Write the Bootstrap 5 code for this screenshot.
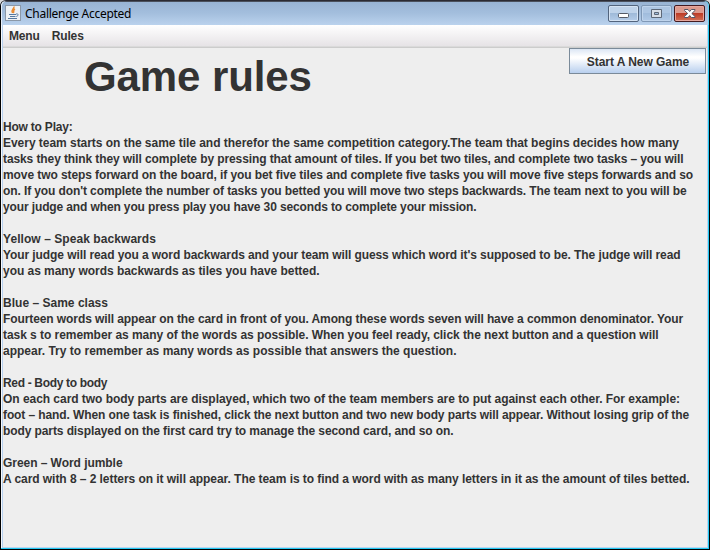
<!DOCTYPE html>
<html lang="en">
<head>
<meta charset="utf-8">
<meta name="viewport" content="width=device-width, initial-scale=1">
<title>Challenge Accepted</title>
<link rel="stylesheet" href="https://cdn.jsdelivr.net/npm/bootstrap@5.3.0/dist/css/bootstrap.min.css">
<style>
html,body{height:100%;background:#d8dade}
body{font-family:"Liberation Sans",Arial,sans-serif;font-weight:700;font-size:12px;line-height:16px;color:#333}
.window{width:710px;height:550px;background:#eee;border:1px solid #000;border-top-color:#2b2b33;border-radius:6px 6px 0 0;box-shadow:inset -1px -1px #22c8f2,inset 1px 0 #f4f8fd,inset -2px -2px #bcd6ee,inset 2px 0 #b7d0ee}
.titlebar{height:24px;padding:0 4px 0 4px;background:linear-gradient(#4a505c 0,#4a505c 1px,#98b4d4 1px,#a3bedd 50%,#bad2ed);border-radius:5px 5px 0 0;box-shadow:inset -1px 0 #5ed0f0,inset 1px 0 #e6eef8}
.caption-text{font:400 12px/24px "Noto Sans","Open Sans",sans-serif;color:#000;margin-left:4px;padding-top:1px;letter-spacing:-.28px}
.caption-btn{width:31px;height:17px;border:1px solid #52647d;border-radius:2px;box-shadow:inset 0 0 0 1px #d5e3f3;background:linear-gradient(#bfd3ea 50%,#9fbad9 50%,#b5cde9)}
.caption-btn.dim{border-color:#7f98b6;box-shadow:inset 0 0 0 1px #bfd4ec;background:linear-gradient(#adc6e3 50%,#a0bcdc 50%,#b1cae7)}
.caption-btn.close-x{border-color:#431a20;box-shadow:inset 0 0 0 1px #e6a79e;background:linear-gradient(#dc9a8e 45%,#bd3c27 50%,#d27156)}
.caption-set{gap:2px;padding-top:1px}
.menubar{height:23px;margin:0 2px 0 2px;padding-left:6px;background:linear-gradient(#fff,#e6e3e6 21px,#dadada 21px,#dadada 22px,#ccc 22px)}
.menubar a{color:#333;line-height:22px;letter-spacing:-.15px}
.page{margin:0 3px 0 2px}
.start-btn{width:137px;height:26px;font:700 12px/24px "Liberation Sans",Arial,sans-serif;letter-spacing:-.04px;border:1px solid #7a8a99;border-radius:0;color:#333;background:linear-gradient(#dce6f4,#fff 32%,#fff 38%,#b8cfee)}
.start-btn span{display:block;padding:1px 0 0 1px}
.headline{font-size:42px;line-height:48px;padding:5px 0 0 81px;font-weight:700;letter-spacing:-.1px}
.rules{padding-top:18px}
.rules p{margin:0 0 16px;white-space:nowrap}
</style>
</head>
<body class="overflow-hidden">
<div class="window">
<header class="titlebar d-flex align-items-center">
<svg width="16" height="16" viewBox="0 0 16 16"><rect x=".5" y=".5" width="15" height="15" fill="#edf1f5" stroke="#8b98a8"/><path d="M9 1.500C9.500 4 5.500 4.500 7.500 8M10 4C7.500 5.200 9.500 6 8.300 8" fill="none" stroke="#e88b32" stroke-width="1.500"/><path d="M4 9.500h7M5 11.500h5.500M3 13.500h9M11 9c3-.6 2.500 2 .3 2.500" fill="none" stroke="#5579a0"/></svg>
<span class="caption-text">Challenge Accepted</span>
<div class="caption-set ms-auto d-flex">
<svg class="caption-btn" viewBox="0 0 29 15"><rect x="9.500" y="7.500" width="10" height="4" rx="1" fill="#fff" stroke="#555b66"/></svg>
<svg class="caption-btn dim" viewBox="0 0 29 15"><path d="M9.500 3.500h10v8h-10zM12.500 6.500h4v2h-4z" fill="#d8dfe8" stroke="#5d6878" fill-rule="evenodd"/></svg>
<svg class="caption-btn close-x" viewBox="0 0 29 15"><path d="M9.500 3.500h3.500l1.700 2 1.700-2H20v1L16.800 7.500l3.200 3v1h-3.600l-1.700-2-1.700 2H9.500v-1l3.200-3-3.200-3z" fill="#fff" stroke="#535666"/></svg>
</div>
</header>
<nav class="menubar d-flex"><a class="text-decoration-none">Menu</a><a class="text-decoration-none ms-2 ps-1">Rules</a></nav>
<main class="page">
<div class="d-flex justify-content-between align-items-start"><h1 class="headline mb-0">Game rules</h1><button class="btn start-btn p-0"><span>Start A New Game</span></button></div>
<section class="rules">
<p><span data-w="69.500">How to Play:</span><br><span data-w="676">Every team starts on the same tile and therefor the same competition category.The team that begins decides how many</span><br><span data-w="680.5">tasks they think they will complete by pressing that amount of tiles. If you bet two tiles, and complete two tasks – you will</span><br><span data-w="690">move two steps forward on the board, if you bet five tiles and complete five tasks you will move five steps forwards and so</span><br><span data-w="683.5">on. If you don't complete the number of tasks you betted you will move two steps backwards. The team next to you will be</span><br><span data-w="473.5">your judge and when you press play you have 30 seconds to complete your mission.</span></p>
<p><span data-w="153">Yellow – Speak backwards</span><br><span data-w="677.5">Your judge will read you a word backwards and your team will guess which word it's supposed to be. The judge will read</span><br><span data-w="316.5">you as many words backwards as tiles you have betted.</span></p>
<p><span data-w="105">Blue – Same class</span><br><span data-w="680">Fourteen words will appear on the card in front of you. Among these words seven will have a common denominator. Your</span><br><span data-w="655.5">task s to remember as many of the words as possible. When you feel ready, click the next button and a question will</span><br><span data-w="453.5">appear. Try to remember as many words as possible that answers the question.</span></p>
<p><span data-w="104">Red - Body to body</span><br><span data-w="677">On each card two body parts are displayed, which two of the team members are to put against each other. For example:</span><br><span data-w="686">foot – hand. When one task is finished, click the next button and two new body parts will appear. Without losing grip of the</span><br><span data-w="450.5">body parts displayed on the first card try to manage the second card, and so on.</span></p>
<p><span data-w="119.500">Green – Word jumble</span><br><span data-w="686.5">A card with 8 – 2 letters on it will appear. The team is to find a word with as many letters in it as the amount of tiles betted.</span></p>
</section>
</main>
</div>
<script src="https://cdn.jsdelivr.net/npm/bootstrap@5.3.0/dist/js/bootstrap.bundle.min.js"></script>
<script>
// Track each line so that it fills its set width.
document.querySelectorAll('[data-w]').forEach(function (line) {
  var spare = line.dataset.w - line.getBoundingClientRect().width;
  line.style.letterSpacing = spare / line.textContent.length + 'px';
});
</script>
</body>
</html>
